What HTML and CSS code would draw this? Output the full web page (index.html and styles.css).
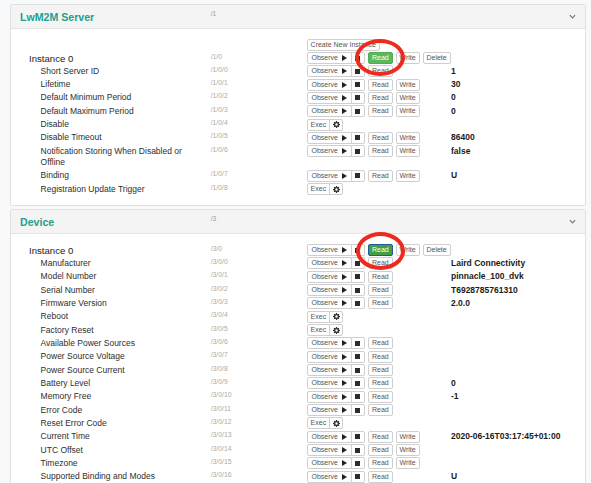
FILE: index.html
```html
<!DOCTYPE html>
<html>
<head>
<meta charset="utf-8">
<link rel="stylesheet" href="styles.css">
</head>
<body>
<div class="page">
  <section class="card">
    <header class="card-head">
      <h2 class="title">LwM2M Server</h2>
      <span class="hpath">/1</span>
      <svg class="chev" viewBox="0 0 8 5" width="7" height="5"><polyline points="1,1 4,4 7,1" fill="none" stroke="#777" stroke-width="1.4"/></svg>
    </header>
    <div class="card-body">
      <div class="row create"><div class="btns"><button class="btn">Create New Instance</button></div></div>
      <div class="row inst"><div class="name">Instance 0</div><div class="path">/1/0</div>
        <div class="btns"><span class="grp"><button class="btn obs">Observe<svg viewBox="0 0 5 6" width="5" height="6"><path d="M0 0L5 3L0 6z" fill="#222"/></svg></button><button class="btn stop"><span class="sq"></span></button></span><button class="btn green">Read</button><button class="btn">Write</button><button class="btn">Delete</button></div><div class="val"></div></div>
      <div class="row"><div class="name">Short Server ID</div><div class="path">/1/0/0</div>
        <div class="btns"><span class="grp"><button class="btn obs">Observe<svg viewBox="0 0 5 6" width="5" height="6"><path d="M0 0L5 3L0 6z" fill="#222"/></svg></button><button class="btn stop"><span class="sq"></span></button></span><button class="btn">Read</button></div><div class="val">1</div></div>
      <div class="row"><div class="name">Lifetime</div><div class="path">/1/0/1</div>
        <div class="btns"><span class="grp"><button class="btn obs">Observe<svg viewBox="0 0 5 6" width="5" height="6"><path d="M0 0L5 3L0 6z" fill="#222"/></svg></button><button class="btn stop"><span class="sq"></span></button></span><button class="btn">Read</button><button class="btn">Write</button></div><div class="val">30</div></div>
      <div class="row"><div class="name">Default Minimum Period</div><div class="path">/1/0/2</div>
        <div class="btns"><span class="grp"><button class="btn obs">Observe<svg viewBox="0 0 5 6" width="5" height="6"><path d="M0 0L5 3L0 6z" fill="#222"/></svg></button><button class="btn stop"><span class="sq"></span></button></span><button class="btn">Read</button><button class="btn">Write</button></div><div class="val">0</div></div>
      <div class="row"><div class="name">Default Maximum Period</div><div class="path">/1/0/3</div>
        <div class="btns"><span class="grp"><button class="btn obs">Observe<svg viewBox="0 0 5 6" width="5" height="6"><path d="M0 0L5 3L0 6z" fill="#222"/></svg></button><button class="btn stop"><span class="sq"></span></button></span><button class="btn">Read</button><button class="btn">Write</button></div><div class="val">0</div></div>
      <div class="row"><div class="name">Disable</div><div class="path">/1/0/4</div>
        <div class="btns"><span class="grp"><button class="btn">Exec</button><button class="btn gear"><svg viewBox="0 0 16 16" width="7" height="7"><path fill-rule="evenodd" fill="#333" d="M6.8 0h2.4l.4 2.2 1.3.6 1.9-1.3 1.7 1.7-1.3 1.9.6 1.3 2.2.4v2.4l-2.2.4-.6 1.3 1.3 1.9-1.7 1.7-1.9-1.3-1.3.6-.4 2.2H6.8l-.4-2.2-1.3-.6-1.9 1.3-1.7-1.7 1.3-1.9-.6-1.3L0 9.2V6.8l2.2-.4.6-1.3-1.3-1.9 1.7-1.7 1.9 1.3 1.3-.6z M8 5.3a2.7 2.7 0 1 0 0 5.4a2.7 2.7 0 1 0 0-5.4z"/></svg></button></span></div><div class="val"></div></div>
      <div class="row"><div class="name">Disable Timeout</div><div class="path">/1/0/5</div>
        <div class="btns"><span class="grp"><button class="btn obs">Observe<svg viewBox="0 0 5 6" width="5" height="6"><path d="M0 0L5 3L0 6z" fill="#222"/></svg></button><button class="btn stop"><span class="sq"></span></button></span><button class="btn">Read</button><button class="btn">Write</button></div><div class="val">86400</div></div>
      <div class="row"><div class="name">Notification Storing When Disabled or Offline</div><div class="path">/1/0/6</div>
        <div class="btns"><span class="grp"><button class="btn obs">Observe<svg viewBox="0 0 5 6" width="5" height="6"><path d="M0 0L5 3L0 6z" fill="#222"/></svg></button><button class="btn stop"><span class="sq"></span></button></span><button class="btn">Read</button><button class="btn">Write</button></div><div class="val">false</div></div>
      <div class="row"><div class="name">Binding</div><div class="path">/1/0/7</div>
        <div class="btns"><span class="grp"><button class="btn obs">Observe<svg viewBox="0 0 5 6" width="5" height="6"><path d="M0 0L5 3L0 6z" fill="#222"/></svg></button><button class="btn stop"><span class="sq"></span></button></span><button class="btn">Read</button><button class="btn">Write</button></div><div class="val">U</div></div>
      <div class="row"><div class="name">Registration Update Trigger</div><div class="path">/1/0/8</div>
        <div class="btns"><span class="grp"><button class="btn">Exec</button><button class="btn gear"><svg viewBox="0 0 16 16" width="7" height="7"><path fill-rule="evenodd" fill="#333" d="M6.8 0h2.4l.4 2.2 1.3.6 1.9-1.3 1.7 1.7-1.3 1.9.6 1.3 2.2.4v2.4l-2.2.4-.6 1.3 1.3 1.9-1.7 1.7-1.9-1.3-1.3.6-.4 2.2H6.8l-.4-2.2-1.3-.6-1.9 1.3-1.7-1.7 1.3-1.9-.6-1.3L0 9.2V6.8l2.2-.4.6-1.3-1.3-1.9 1.7-1.7 1.9 1.3 1.3-.6z M8 5.3a2.7 2.7 0 1 0 0 5.4a2.7 2.7 0 1 0 0-5.4z"/></svg></button></span></div><div class="val"></div></div>
    </div>
  </section>

  <section class="card">
    <header class="card-head">
      <h2 class="title">Device</h2>
      <span class="hpath">/3</span>
      <svg class="chev" viewBox="0 0 8 5" width="7" height="5"><polyline points="1,1 4,4 7,1" fill="none" stroke="#777" stroke-width="1.4"/></svg>
    </header>
    <div class="card-body">
      <div class="row inst"><div class="name">Instance 0</div><div class="path">/3/0</div>
        <div class="btns"><span class="grp"><button class="btn obs">Observe<svg viewBox="0 0 5 6" width="5" height="6"><path d="M0 0L5 3L0 6z" fill="#222"/></svg></button><button class="btn stop"><span class="sq"></span></button></span><button class="btn green focus">Read</button><button class="btn">Write</button><button class="btn">Delete</button></div><div class="val"></div></div>
      <div class="row"><div class="name">Manufacturer</div><div class="path">/3/0/0</div>
        <div class="btns"><span class="grp"><button class="btn obs">Observe<svg viewBox="0 0 5 6" width="5" height="6"><path d="M0 0L5 3L0 6z" fill="#222"/></svg></button><button class="btn stop"><span class="sq"></span></button></span><button class="btn">Read</button></div><div class="val">Laird Connectivity</div></div>
      <div class="row"><div class="name">Model Number</div><div class="path">/3/0/1</div>
        <div class="btns"><span class="grp"><button class="btn obs">Observe<svg viewBox="0 0 5 6" width="5" height="6"><path d="M0 0L5 3L0 6z" fill="#222"/></svg></button><button class="btn stop"><span class="sq"></span></button></span><button class="btn">Read</button></div><div class="val">pinnacle_100_dvk</div></div>
      <div class="row"><div class="name">Serial Number</div><div class="path">/3/0/2</div>
        <div class="btns"><span class="grp"><button class="btn obs">Observe<svg viewBox="0 0 5 6" width="5" height="6"><path d="M0 0L5 3L0 6z" fill="#222"/></svg></button><button class="btn stop"><span class="sq"></span></button></span><button class="btn">Read</button></div><div class="val">T6928785761310</div></div>
      <div class="row"><div class="name">Firmware Version</div><div class="path">/3/0/3</div>
        <div class="btns"><span class="grp"><button class="btn obs">Observe<svg viewBox="0 0 5 6" width="5" height="6"><path d="M0 0L5 3L0 6z" fill="#222"/></svg></button><button class="btn stop"><span class="sq"></span></button></span><button class="btn">Read</button></div><div class="val">2.0.0</div></div>
      <div class="row"><div class="name">Reboot</div><div class="path">/3/0/4</div>
        <div class="btns"><span class="grp"><button class="btn">Exec</button><button class="btn gear"><svg viewBox="0 0 16 16" width="7" height="7"><path fill-rule="evenodd" fill="#333" d="M6.8 0h2.4l.4 2.2 1.3.6 1.9-1.3 1.7 1.7-1.3 1.9.6 1.3 2.2.4v2.4l-2.2.4-.6 1.3 1.3 1.9-1.7 1.7-1.9-1.3-1.3.6-.4 2.2H6.8l-.4-2.2-1.3-.6-1.9 1.3-1.7-1.7 1.3-1.9-.6-1.3L0 9.2V6.8l2.2-.4.6-1.3-1.3-1.9 1.7-1.7 1.9 1.3 1.3-.6z M8 5.3a2.7 2.7 0 1 0 0 5.4a2.7 2.7 0 1 0 0-5.4z"/></svg></button></span></div><div class="val"></div></div>
      <div class="row"><div class="name">Factory Reset</div><div class="path">/3/0/5</div>
        <div class="btns"><span class="grp"><button class="btn">Exec</button><button class="btn gear"><svg viewBox="0 0 16 16" width="7" height="7"><path fill-rule="evenodd" fill="#333" d="M6.8 0h2.4l.4 2.2 1.3.6 1.9-1.3 1.7 1.7-1.3 1.9.6 1.3 2.2.4v2.4l-2.2.4-.6 1.3 1.3 1.9-1.7 1.7-1.9-1.3-1.3.6-.4 2.2H6.8l-.4-2.2-1.3-.6-1.9 1.3-1.7-1.7 1.3-1.9-.6-1.3L0 9.2V6.8l2.2-.4.6-1.3-1.3-1.9 1.7-1.7 1.9 1.3 1.3-.6z M8 5.3a2.7 2.7 0 1 0 0 5.4a2.7 2.7 0 1 0 0-5.4z"/></svg></button></span></div><div class="val"></div></div>
      <div class="row"><div class="name">Available Power Sources</div><div class="path">/3/0/6</div>
        <div class="btns"><span class="grp"><button class="btn obs">Observe<svg viewBox="0 0 5 6" width="5" height="6"><path d="M0 0L5 3L0 6z" fill="#222"/></svg></button><button class="btn stop"><span class="sq"></span></button></span><button class="btn">Read</button></div><div class="val"></div></div>
      <div class="row"><div class="name">Power Source Voltage</div><div class="path">/3/0/7</div>
        <div class="btns"><span class="grp"><button class="btn obs">Observe<svg viewBox="0 0 5 6" width="5" height="6"><path d="M0 0L5 3L0 6z" fill="#222"/></svg></button><button class="btn stop"><span class="sq"></span></button></span><button class="btn">Read</button></div><div class="val"></div></div>
      <div class="row"><div class="name">Power Source Current</div><div class="path">/3/0/8</div>
        <div class="btns"><span class="grp"><button class="btn obs">Observe<svg viewBox="0 0 5 6" width="5" height="6"><path d="M0 0L5 3L0 6z" fill="#222"/></svg></button><button class="btn stop"><span class="sq"></span></button></span><button class="btn">Read</button></div><div class="val"></div></div>
      <div class="row"><div class="name">Battery Level</div><div class="path">/3/0/9</div>
        <div class="btns"><span class="grp"><button class="btn obs">Observe<svg viewBox="0 0 5 6" width="5" height="6"><path d="M0 0L5 3L0 6z" fill="#222"/></svg></button><button class="btn stop"><span class="sq"></span></button></span><button class="btn">Read</button></div><div class="val">0</div></div>
      <div class="row"><div class="name">Memory Free</div><div class="path">/3/0/10</div>
        <div class="btns"><span class="grp"><button class="btn obs">Observe<svg viewBox="0 0 5 6" width="5" height="6"><path d="M0 0L5 3L0 6z" fill="#222"/></svg></button><button class="btn stop"><span class="sq"></span></button></span><button class="btn">Read</button></div><div class="val">-1</div></div>
      <div class="row"><div class="name">Error Code</div><div class="path">/3/0/11</div>
        <div class="btns"><span class="grp"><button class="btn obs">Observe<svg viewBox="0 0 5 6" width="5" height="6"><path d="M0 0L5 3L0 6z" fill="#222"/></svg></button><button class="btn stop"><span class="sq"></span></button></span><button class="btn">Read</button></div><div class="val"></div></div>
      <div class="row"><div class="name">Reset Error Code</div><div class="path">/3/0/12</div>
        <div class="btns"><span class="grp"><button class="btn">Exec</button><button class="btn gear"><svg viewBox="0 0 16 16" width="7" height="7"><path fill-rule="evenodd" fill="#333" d="M6.8 0h2.4l.4 2.2 1.3.6 1.9-1.3 1.7 1.7-1.3 1.9.6 1.3 2.2.4v2.4l-2.2.4-.6 1.3 1.3 1.9-1.7 1.7-1.9-1.3-1.3.6-.4 2.2H6.8l-.4-2.2-1.3-.6-1.9 1.3-1.7-1.7 1.3-1.9-.6-1.3L0 9.2V6.8l2.2-.4.6-1.3-1.3-1.9 1.7-1.7 1.9 1.3 1.3-.6z M8 5.3a2.7 2.7 0 1 0 0 5.4a2.7 2.7 0 1 0 0-5.4z"/></svg></button></span></div><div class="val"></div></div>
      <div class="row"><div class="name">Current Time</div><div class="path">/3/0/13</div>
        <div class="btns"><span class="grp"><button class="btn obs">Observe<svg viewBox="0 0 5 6" width="5" height="6"><path d="M0 0L5 3L0 6z" fill="#222"/></svg></button><button class="btn stop"><span class="sq"></span></button></span><button class="btn">Read</button><button class="btn">Write</button></div><div class="val">2020-06-16T03:17:45+01:00</div></div>
      <div class="row"><div class="name">UTC Offset</div><div class="path">/3/0/14</div>
        <div class="btns"><span class="grp"><button class="btn obs">Observe<svg viewBox="0 0 5 6" width="5" height="6"><path d="M0 0L5 3L0 6z" fill="#222"/></svg></button><button class="btn stop"><span class="sq"></span></button></span><button class="btn">Read</button><button class="btn">Write</button></div><div class="val"></div></div>
      <div class="row"><div class="name">Timezone</div><div class="path">/3/0/15</div>
        <div class="btns"><span class="grp"><button class="btn obs">Observe<svg viewBox="0 0 5 6" width="5" height="6"><path d="M0 0L5 3L0 6z" fill="#222"/></svg></button><button class="btn stop"><span class="sq"></span></button></span><button class="btn">Read</button><button class="btn">Write</button></div><div class="val"></div></div>
      <div class="row"><div class="name">Supported Binding and Modes</div><div class="path">/3/0/16</div>
        <div class="btns"><span class="grp"><button class="btn obs">Observe<svg viewBox="0 0 5 6" width="5" height="6"><path d="M0 0L5 3L0 6z" fill="#222"/></svg></button><button class="btn stop"><span class="sq"></span></button></span><button class="btn">Read</button></div><div class="val">U</div></div>
    </div>
  </section>

  <div class="mark mark-1"></div>
  <div class="mark mark-2"></div>
</div>
</body>
</html>
```

FILE: styles.css
```css
* { box-sizing: border-box; }
html, body { margin: 0; }
body {
  background: #f8f9fa;
  font-family: "Liberation Sans", Arial, sans-serif;
  color: #333;
  overflow: hidden;
}
.page {
  position: relative;
  padding: 4px 5px 0 10px;
}
.card {
  background: #fff;
  border: 1px solid #e1e1e1;
  border-radius: 2px;
  margin-bottom: 3px;
}
.card-head {
  display: grid;
  grid-template-columns: 190.7px 1fr auto;
  align-items: center;
  height: 24px;
  padding: 0 9px;
  background: #f4f4f4;
  border-bottom: 1px solid #e3e3e3;
}
.title {
  margin: 0;
  font-size: 10.6px;
  font-weight: 700;
  color: #22a08e;
  line-height: 12px;
}
.hpath {
  align-self: start;
  margin-top: 5px;
  font-size: 6.6px;
  color: #9a9a9a;
}
.chev { display: block; }
.card-body {
  padding: 9.5px 0 9px 18px;
}
.row {
  display: grid;
  grid-template-columns: 181.7px 96px 144.3px 1fr;
  min-height: 13.333px;
}
.row.create { min-height: 13px; }
.row.create .btns { grid-column: 3; }
.name {
  font-size: 8.5px;
  line-height: 11.333px;
  padding: 1px 10px 1px 11.6px;
  color: #2e2e2e;
}
.inst .name {
  font-size: 9.6px;
  padding-left: 0;
  color: #222;
}
.path {
  font-size: 6.8px;
  line-height: 9.5px;
  color: #ababab;
}
.btns {
  display: flex;
  align-items: flex-start;
  gap: 3px;
  padding-top: 0.5px;
}
.grp { display: flex; }
.btn {
  display: inline-flex;
  align-items: center;
  height: 12px;
  margin: 0;
  padding: 0 2.9px;
  border: 1px solid #cfcfcf;
  border-radius: 2px;
  background: #fff;
  font-family: "Liberation Sans", Arial, sans-serif;
  font-size: 7px;
  line-height: 10px;
  color: #555;
  white-space: nowrap;
}
.btn svg { display: block; }
.obs { padding: 0 4px 0 3.8px; }
.obs svg { margin-left: 3.8px; }
.grp .btn:first-child { border-top-right-radius: 0; border-bottom-right-radius: 0; }
.grp .btn + .btn { margin-left: -1px; border-top-left-radius: 0; border-bottom-left-radius: 0; }
.stop, .gear {
  width: 14.3px;
  justify-content: center;
  padding: 0;
}
.sq {
  display: block;
  width: 5px;
  height: 5px;
  background: #2c2c2c;
}
.green {
  background: #5cb85c;
  border-color: #4cae4c;
  color: #fff;
}
.green.focus {
  background: #449d44;
  border-color: #1f5a9e;
}
.val {
  font-size: 8.5px;
  font-weight: 700;
  line-height: 13.333px;
  color: #1a1a1a;
}
.mark {
  position: absolute;
  border: 4px solid #ec2a1e;
  border-radius: 50%;
}
.mark-1 { left: 355px; top: 39px; width: 50px; height: 37px; }
.mark-2 { left: 356px; top: 231.5px; width: 49px; height: 38px; }
```
